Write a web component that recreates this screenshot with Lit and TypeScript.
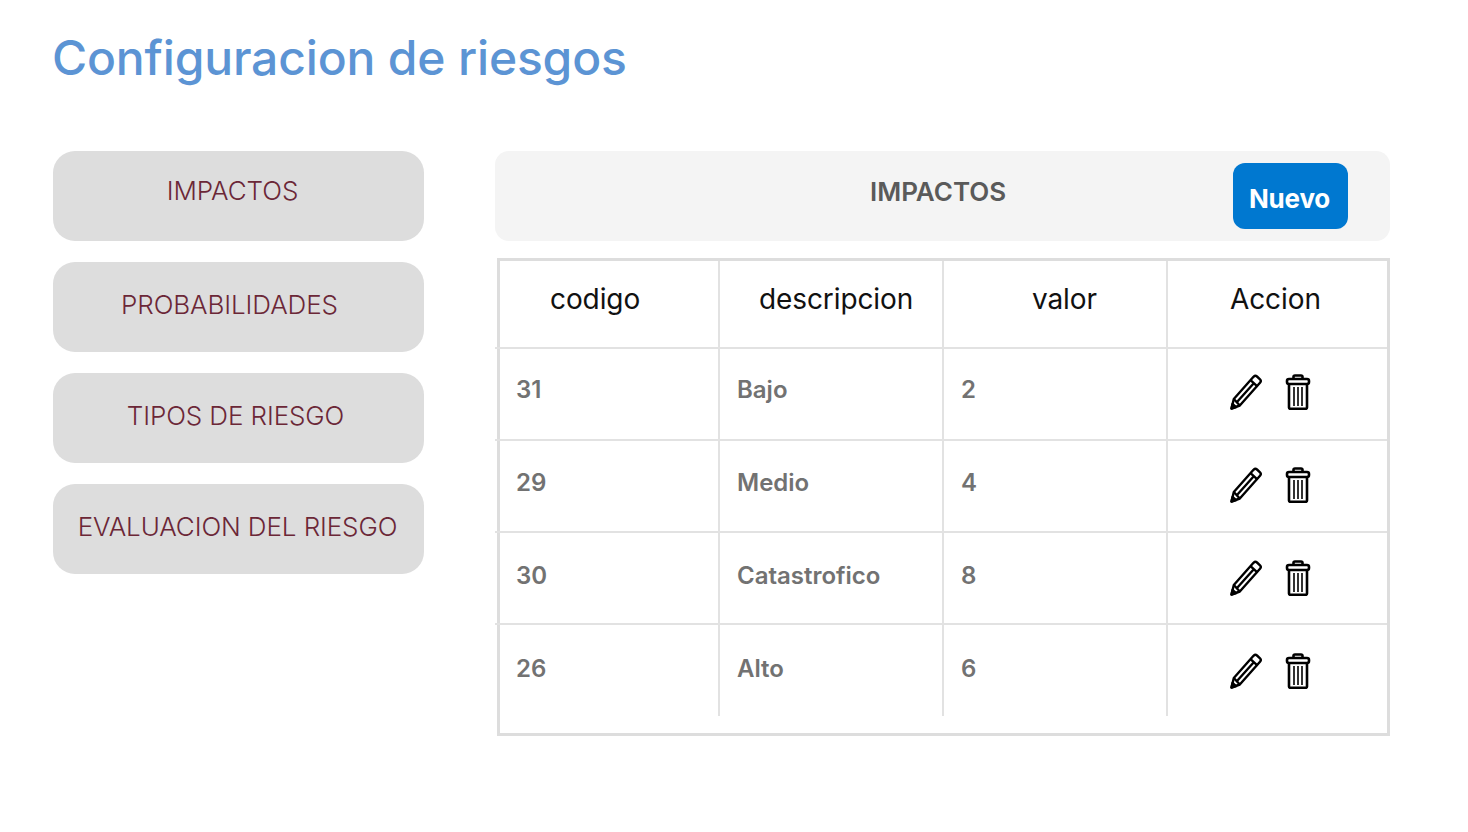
import { LitElement, html, css, svg } from "lit";
import { customElement } from "lit/decorators.js";

const NAV = [
  { label: "IMPACTOS", shift: -6, lift: -5 },
  { label: "PROBABILIDADES", shift: -9, lift: -2 },
  { label: "TIPOS DE RIESGO", shift: -3, lift: -2 },
  { label: "EVALUACION DEL RIESGO", shift: -1, lift: -2 },
];
const ROWS = [
  ["31", "Bajo", "2"],
  ["29", "Medio", "4"],
  ["30", "Catastrofico", "8"],
  ["26", "Alto", "6"],
];

const pencil = svg`<svg class="pencil" viewBox="0 0 32 36" width="32" height="36" fill="none" stroke="#000" stroke-width="2.4" stroke-linejoin="round">
  <path d="M1.5 34.5 L3.8 25 L23.5 2.8 Q25.3 1 27 2.5 L30 5.3 Q31.6 7 30 8.8 L9.8 31.5 Z" fill="#fff"/>
  <path d="M20.5 6.2 L27.6 12.6 M3.8 25 L9.8 31.5 M7 28 L24 9" />
  <path d="M1.5 34.5 L2.5 30 L6 33.2 Z" fill="#000"/>
</svg>`;
const trash = svg`<svg class="trash" viewBox="0 0 26 36" width="26" height="36" fill="none" stroke="#000" stroke-width="2.6" stroke-linejoin="round">
  <path d="M8.5 5 V2.8 Q8.5 1.5 10 1.5 H16 Q17.5 1.5 17.5 2.8 V5"/>
  <rect x="2" y="5" width="22" height="5" rx="2"/>
  <path d="M4 10 V33.6 Q4 34.8 5.2 34.8 H20.8 Q22 34.8 22 33.6 V10"/>
  <path d="M9 13 V32 M13 13 V32 M17 13 V32" stroke-width="1.6"/>
</svg>`;

@customElement("app-root")
export class AppRoot extends LitElement {
  static styles = css`
    :host {
      display: block;
      width: 1468px;
      height: 832px;
      background: #fff;
      font-family: Inter, "Liberation Sans", sans-serif;
      box-sizing: border-box;
      padding: 28px 78px 0 53px;
    }
    h1 {
      margin: 0 0 0 -1px;
      font-size: 48px;
      line-height: 60px;
      font-weight: 500;
      letter-spacing: -0.17px;
      color: #5c94d4;
    }
    .layout {
      display: flex;
      gap: 71px;
      margin-top: 63px;
      align-items: flex-start;
    }
    .nav {
      width: 371px;
      display: flex;
      flex-direction: column;
      gap: 21px;
    }
    .nav-item {
      height: 90px;
      box-sizing: border-box;
      background: #dddddd;
      border-radius: 22px;
      display: flex;
      align-items: center;
      justify-content: center;
      font-size: 26px;
      font-weight: 300;
      letter-spacing: -0.1px;
      color: #6b2737;
    }
    .main {
      width: 895px;
    }
    .head {
      height: 90px;
      background: #f4f4f4;
      border-radius: 14px;
      position: relative;
      display: flex;
      align-items: center;
      justify-content: flex-end;
      padding-right: 42px;
      box-sizing: border-box;
    }
    .head-title {
      position: absolute;
      left: 375px;
      top: 25px;
      font-size: 26px;
      line-height: 32px;
      font-weight: 600;
      color: #5a5a5a;
    }
    .new {
      width: 115px;
      height: 66px;
      border: none;
      border-radius: 12px;
      background: #0078d0;
      color: #fff;
      font: 700 26px Inter, sans-serif;
      letter-spacing: -0.2px;
      padding: 5px 2px 0 0;
    }
    .table {
      margin: 17px 0 0 2px;
      border: 3px solid #dddddd;
      padding-bottom: 17px;
    }
    .row {
      display: grid;
      grid-template-columns: 220px 224px 224px 1fr;
      height: 92px;
      box-sizing: border-box;
      border-bottom: 2px solid #e2e2e2;
      margin-left: -5px;
      padding-left: 5px;
    }
    .row.head-row {
      height: 88px;
    }
    .row:last-child {
      border-bottom: none;
      height: 91px;
    }
    .cell {
      border-right: 2px solid #e2e2e2;
      display: flex;
      align-items: flex-start;
      box-sizing: border-box;
      font-size: 24px;
      line-height: 30px;
      font-weight: 600;
      color: #727272;
      padding-left: 17px;
    }
    .cell:first-child {
      padding-left: 16px;
    }
    .cell:last-child {
      border-right: none;
    }
    .th {
      font-size: 28px;
      line-height: 34px;
      font-weight: 400;
      letter-spacing: -0.1px;
      color: #111;
      padding-top: 21px;
    }
    .actions {
      padding-left: 62px;
      gap: 23px;
    }
    svg {
      display: block;
      flex: none;
    }
  `;

  render() {
    const heads: [string, number][] = [
      ["codigo", 50],
      ["descripcion", 39],
      ["valor", 88],
      ["Accion", 62],
    ];
    return html`
      <h1>Configuracion de riesgos</h1>
      <div class="layout">
        <nav class="nav">
          ${NAV.map(
            (n) => html`<div
              class="nav-item"
              style="padding-right:${-n.shift * 2}px;padding-bottom:${-n.lift * 2 + 1}px"
            >
              ${n.label}
            </div>`
          )}
        </nav>
        <div class="main">
          <div class="head">
            <span class="head-title">IMPACTOS</span>
            <button class="new">Nuevo</button>
          </div>
          <div class="table">
            <div class="row head-row">
              ${heads.map(
                ([t, p]) => html`<div class="cell th" style="padding-left:${p}px">${t}</div>`
              )}
            </div>
            ${ROWS.map(
              (r, i) => html`<div class="row">
                ${r.map((c) => html`<div class="cell" style="padding-top:${26 + i}px">${c}</div>`)}
                <div class="cell actions" style="padding-top:${25 + i}px">${pencil}${trash}</div>
              </div>`
            )}
          </div>
        </div>
      </div>
    `;
  }
}
